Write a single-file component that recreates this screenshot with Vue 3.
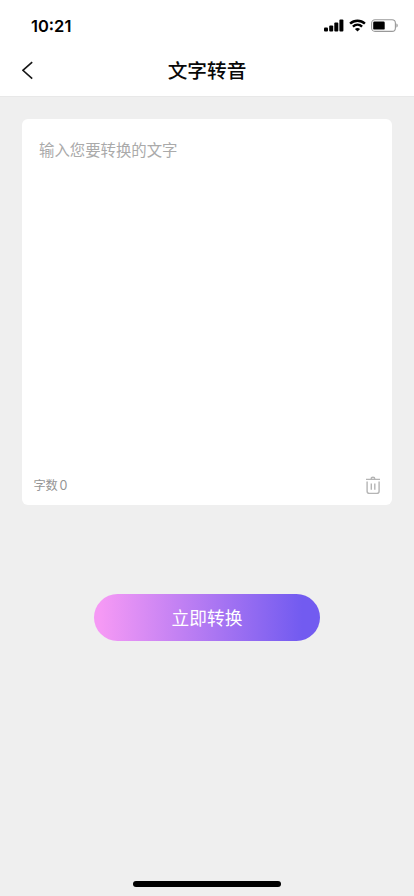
<script setup>
import { ref } from 'vue'

const text = ref('')
</script>

<template>
  <div class="screen">
    <header class="top">
      <div class="status">
        <span class="time">10:21</span>
        <div class="indicators">
          <svg class="signal" width="20" height="13" viewBox="0 0 20 13">
            <rect x="0" y="8.6" width="4" height="4" rx="1" />
            <rect x="5.2" y="6.4" width="4" height="6.2" rx="1" />
            <rect x="10.3" y="3.5" width="4" height="9.1" rx="1" />
            <rect x="15.4" y="0.6" width="4" height="12" rx="1" />
          </svg>
          <svg class="wifi" width="17" height="13" viewBox="0 0 17 13">
            <path d="M1.1 4.7C5.3 .7 11.7 .7 15.9 4.7M3.9 7.6C6.6 5.1 10.4 5.1 13.1 7.6" fill="none" stroke="#000" stroke-width="2.4" />
            <path d="M8.5 12.5 5.9 9.9C7.3 8.6 9.7 8.6 11.1 9.9Z" />
          </svg>
          <svg class="battery" width="27" height="13" viewBox="0 0 27 13">
            <rect x=".6" y=".8" width="23.8" height="11.6" rx="3.4" fill="none" stroke="#999" stroke-width="1.1" />
            <rect x="2.2" y="2.6" width="11.5" height="8" rx="1.2" />
            <path d="M25.4 4.6C27.2 5.3 27.2 7.9 25.4 8.6Z" fill="#999" />
          </svg>
        </div>
      </div>
      <nav class="nav">
        <button class="back" aria-label="返回">
          <svg width="12" height="19" viewBox="0 0 12 19">
            <path d="M10.2 1.1 .9 9.3 10.2 17.6" fill="none" stroke="#161616" stroke-width="1.6" />
          </svg>
        </button>
        <h1 class="title">文字转音</h1>
      </nav>
    </header>

    <main class="content">
      <section class="card">
        <textarea v-model="text" class="input" placeholder="输入您要转换的文字"></textarea>
        <div class="tools">
          <span class="count">字数 <span class="number">{{ text.length }}</span></span>
          <button class="clear" aria-label="清空" @click="text = ''">
            <svg width="16" height="19" viewBox="0 0 16 19">
              <path d="M1 3.4H15M6.2 2.9Q6.2 1.2 8 1.2T9.8 2.9M2.1 5.4V15.3Q2.1 17.4 4.2 17.4H12Q14.1 17.4 14.1 15.3V5.4M6.3 7.4V13.7M9.8 7.4V13.7" fill="none" stroke="#b5b5b5" stroke-width="1.4" />
            </svg>
          </button>
        </div>
      </section>
      <button class="convert">立即转换</button>
    </main>
    <div class="home-bar"></div>
  </div>
</template>

<style>
body {
  margin: 0;
  background: #efefef;
}
</style>

<style scoped>
.screen {
  display: flex;
  flex-direction: column;
  box-sizing: border-box;
  height: 896px;
  padding-bottom: 9px;
  background: #efefef;
  font-family: "Noto Sans CJK SC", sans-serif;
}
button {
  display: flex;
  padding: 0;
  border: 0;
  background: none;
  font-family: inherit;
}
svg {
  display: block;
}
.top {
  box-sizing: border-box;
  height: 97px;
  border-bottom: 1px solid #e8e8e8;
  background: #fff;
}
.status {
  display: flex;
  align-items: center;
  justify-content: space-between;
  height: 44px;
  padding: 7px 16px 0 31px;
  box-sizing: border-box;
}
.time {
  padding-top: 1px;
  font: 600 16.5px/20px Inter, sans-serif;
}
.indicators {
  display: flex;
  align-items: center;
  gap: 5px;
}
.nav {
  display: grid;
  grid-template-columns: 1fr auto 1fr;
  align-items: center;
  height: 52px;
  padding: 0 22px;
}
.title {
  margin: 0;
  color: #080808;
  font-size: 19.7px;
  font-weight: 500;
  line-height: 28px;
}
.content {
  display: flex;
  flex: 1;
  flex-direction: column;
  align-items: center;
  padding: 22.4px 22.4px 0;
}
.card {
  display: flex;
  flex-direction: column;
  align-self: stretch;
  box-sizing: border-box;
  height: 385.6px;
  border-radius: 6px;
  background: #fff;
}
.input {
  flex: 1;
  padding: 17.6px 16.6px;
  border: 0;
  outline: 0;
  resize: none;
  background: transparent;
  color: #333;
  font-family: inherit;
  font-size: 15.4px;
  line-height: 24px;
}
.input::placeholder {
  color: #aaa;
  opacity: 1;
}
.tools {
  display: flex;
  align-items: center;
  justify-content: space-between;
  height: 39px;
  padding: 0 10.6px 0 11px;
}
.count {
  color: #949494;
  font-size: 12.2px;
  line-height: 20px;
  word-spacing: -1px;
}
.number {
  font-family: Inter, sans-serif;
  font-size: 12.5px;
}
.convert {
  align-items: center;
  justify-content: center;
  box-sizing: border-box;
  width: 226px;
  height: 47px;
  margin-top: 88.6px;
  padding-bottom: 1px;
  border-radius: 24px;
  background: linear-gradient(90deg, #f599f5 3%, #725bf0 92%);
  color: #fff;
  font-size: 17.7px;
}
.home-bar {
  align-self: center;
  width: 148px;
  height: 6px;
  border-radius: 3px;
  background: #000;
}
</style>
